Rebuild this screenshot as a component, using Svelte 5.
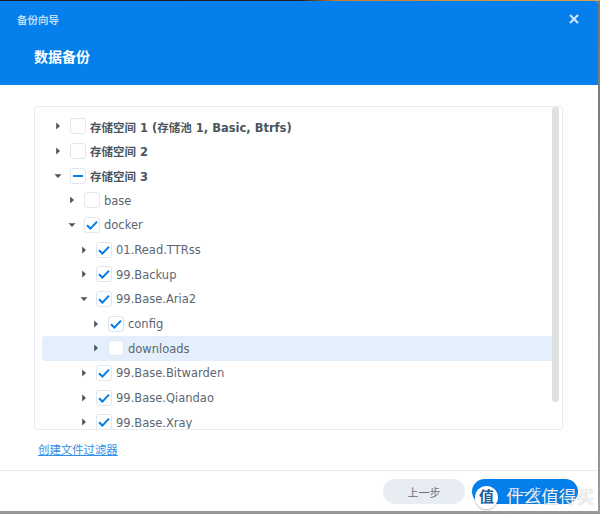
<script>
  const rows = [
    { t: '存储空间 1 (存储池 1, Basic, Btrfs)', l: 0, s: 'off', bold: true },
    { t: '存储空间 2', l: 0, s: 'off', bold: true },
    { t: '存储空间 3', l: 0, s: 'mixed', bold: true, open: true },
    { t: 'base', l: 1, s: 'off' },
    { t: 'docker', l: 1, s: 'on', open: true },
    { t: '01.Read.TTRss', l: 2, s: 'on' },
    { t: '99.Backup', l: 2, s: 'on' },
    { t: '99.Base.Aria2', l: 2, s: 'on', open: true },
    { t: 'config', l: 3, s: 'on' },
    { t: 'downloads', l: 3, s: 'off', hl: true },
    { t: '99.Base.Bitwarden', l: 2, s: 'on' },
    { t: '99.Base.Qiandao', l: 2, s: 'on' },
    { t: '99.Base.Xray', l: 2, s: 'on' }
  ];
</script>

<div class="page">
  <div class="strip"></div>
  <div class="dialog">
    <header class="head">
      <div class="top">
        <span class="wizard">备份向导</span>
        <svg class="close" width="10" height="10" viewBox="0 0 10 10"><path d="M1 1l8 8M9 1l-8 8" stroke="#d4e8fb" stroke-width="2" fill="none" /></svg>
      </div>
      <h1>数据备份</h1>
    </header>
    <main class="body">
      <div class="tree">
        {#each rows as r}
          <div class="row" class:hl={r.hl} class:bold={r.bold}>
            <span class="ind l{r.l}"></span>
            <svg class="arrow" width="8" height="8" viewBox="0 0 8 8">
              {#if r.open}
                <path d="M0.5 2.2h7L4 6z" fill="#4a5560" />
              {:else}
                <path d="M2.2 0.5v7L6 4z" fill="#4a5560" />
              {/if}
            </svg>
            <span class="box">
              {#if r.s === 'on'}
                <svg width="14" height="14" viewBox="0 0 14 14"><path d="M2 7.2l3.4 3.4L12 3.6" stroke="#057fe6" stroke-width="2.1" fill="none" /></svg>
              {:else if r.s === 'mixed'}
                <svg width="14" height="14" viewBox="0 0 14 14"><path d="M2 7h10" stroke="#057fe6" stroke-width="2" fill="none" /></svg>
              {/if}
            </span>
            <span class="label">{r.t}</span>
          </div>
        {/each}
        <div class="thumb"></div>
      </div>
      <a class="link" href="#filter">创建文件过滤器</a>
    </main>
    <footer class="foot">
      <button class="btn prev">上一步</button>
      <button class="btn next">下一步</button>
    </footer>
  </div>
  <div class="mark">
    <span class="coin">值</span>
    <span class="brand">什么值得买</span>
  </div>
</div>

<style>
  :global(body) {
    margin: 0;
    background: #8a8a8a;
  }
  .page {
    position: relative;
    width: 600px;
    height: 514px;
    overflow: hidden;
    font-family: "DejaVu Sans", "Noto Sans CJK SC", sans-serif;
    background: linear-gradient(#777, #999);
  }
  .strip {
    height: 1px;
    background: linear-gradient(90deg, #151a26 0, #1a2030 50%, #c8802c 56%, #d9a24e 100%);
  }
  .dialog {
    width: 598px;
    height: 510px;
    background: #fff;
    border-radius: 0 3px 0 0;
    overflow: hidden;
    display: flex;
    flex-direction: column;
  }
  .head {
    height: 84px;
    flex: none;
    background: #057feb;
    box-sizing: border-box;
    padding: 9px 19px 0 17px;
  }
  .top {
    display: flex;
    justify-content: space-between;
    align-items: center;
    height: 18px;
  }
  .wizard {
    font-size: 10.5px;
    color: #bcdcf9;
    font-weight: 700;
  }
  h1 {
    margin: 18px 0 0 17px;
    font-size: 14px;
    line-height: 22px;
    font-weight: 700;
    color: #fff;
  }
  .body {
    flex: 1;
    padding: 21px 35px 0 34px;
    box-sizing: border-box;
  }
  .tree {
    position: relative;
    height: 324px;
    box-sizing: border-box;
    border: 1px solid #e6ecf3;
    border-radius: 3px;
    padding: 7px 7px 0;
    overflow: hidden;
  }
  .row {
    height: 24.67px;
    display: flex;
    align-items: center;
    border-radius: 4px;
    font-size: 11.5px;
    color: #5b6672;
  }
  .row.hl {
    background: #e3effb;
  }
  .row.bold {
    font-weight: 700;
    color: #4a5560;
  }
  .ind {
    flex: none;
    width: 12px;
  }
  .ind.l1 { width: 26px; }
  .ind.l2 { width: 38px; }
  .ind.l3 { width: 50px; }
  .arrow {
    flex: none;
    margin-right: 8px;
  }
  .box {
    flex: none;
    width: 16px;
    height: 16px;
    box-sizing: border-box;
    border: 1px solid #dfe6ee;
    border-radius: 3px;
    background: #fff;
    margin-right: 4px;
    display: flex;
    align-items: center;
    justify-content: center;
  }
  .label {
    position: relative;
    top: 0.5px;
  }
  .thumb {
    position: absolute;
    top: 0;
    right: 3px;
    width: 7px;
    height: 295px;
    background: #e0e0e0;
    border-radius: 3px;
  }
  .link {
    display: inline-block;
    margin: 12px 0 0 4px;
    font-size: 11.4px;
    line-height: 16px;
    color: #2f8fe8;
    text-decoration: underline;
  }
  .foot {
    flex: none;
    height: 41px;
    box-sizing: border-box;
    border-top: 1px solid #e6ecf3;
    padding: 8px 20px 0 0;
    display: flex;
    justify-content: flex-end;
    gap: 7px;
  }
  .btn {
    width: 82px;
    height: 25px;
    border: 0;
    border-radius: 13px;
    padding: 0;
    font-family: inherit;
    font-size: 11px;
  }
  .prev {
    background: #e8edf3;
    color: #66717d;
  }
  .next {
    width: 106px;
    background: #057feb;
    color: #cfe5fa;
  }
  .mark {
    position: absolute;
    left: 475px;
    top: 484px;
    display: flex;
    align-items: center;
    gap: 8px;
  }
  .coin {
    width: 23px;
    height: 23px;
    border-radius: 50%;
    background: #fff;
    color: #1a5f9e;
    font-size: 15px;
    line-height: 23px;
    text-align: center;
    font-weight: 700;
    box-shadow: 0 1px 2px rgba(0, 0, 0, 0.25);
  }
  .brand {
    font-size: 17.6px;
    line-height: 26px;
    color: rgba(255, 255, 255, 0.92);
    text-shadow: 0 0 1px rgba(90, 90, 90, 0.6);
    white-space: nowrap;
  }
</style>
